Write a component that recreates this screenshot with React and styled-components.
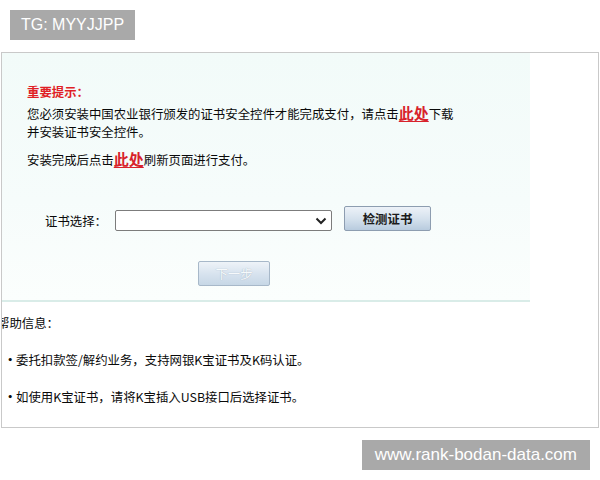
import styled, { createGlobalStyle } from 'styled-components';

const GlobalStyle = createGlobalStyle`
  html, body {
    margin: 0;
    padding: 0;
    background: #fff;
  }
  body {
    width: 600px;
    height: 480px;
    overflow: hidden;
    font-family: "Noto Sans CJK SC", "Liberation Sans", sans-serif;
  }
`;

const Page = styled.div`
  display: flex;
  flex-direction: column;
  width: 600px;
  height: 480px;
`;

const Tag = styled.div`
  align-self: ${(p) => (p.$right ? 'flex-end' : 'flex-start')};
  margin: ${(p) => (p.$right ? '12px 10px 0 0' : '10px 0 0 10px')};
  height: 30px;
  padding: 0 ${(p) => (p.$right ? '13px' : '11px')};
  display: flex;
  align-items: center;
  background: #a9a9a9;
  color: #fff;
  font-family: "Liberation Sans", Arial, sans-serif;
  font-size: ${(p) => (p.$right ? '17px' : '16px')};
  white-space: nowrap;
`;

const Frame = styled.div`
  margin: 12px 0 0 1px;
  width: 598px;
  height: 376px;
  box-sizing: border-box;
  border: 1px solid #c9c9c9;
  overflow: hidden;
  color: #0a0a0a;
  font-size: 12.4px;
  line-height: 18px;
`;

const Notice = styled.div`
  width: 528px;
  height: 249px;
  box-sizing: border-box;
  padding-top: 30px;
  background: linear-gradient(180deg, #f2fbf9 0%, #f6fcfb 60%, #fbfefd 100%);
  border-bottom: 2px solid #d9ece8;
  display: flex;
  flex-direction: column;
`;

const Line = styled.div`
  padding-left: ${(p) => p.$indent ?? 25}px;
  margin-top: ${(p) => p.$gap ?? 0}px;
  white-space: nowrap;
`;

const Title = styled(Line)`
  color: #e01f26;
  font-weight: 700;
`;

const Here = styled.a`
  color: #d8222b;
  font-weight: 700;
  font-size: 15px;
  text-decoration: underline;
  text-underline-offset: 2px;
`;

const CertRow = styled.div`
  display: flex;
  align-items: center;
  margin: 37px 0 0 43px;
  height: 25px;
`;

const Label = styled.span`
  width: 70px;
  margin-top: 4px;
`;

const Select = styled.div`
  width: 217px;
  height: 21px;
  margin-top: 4px;
  box-sizing: border-box;
  border: 1px solid #7c7c7c;
  border-radius: 2px;
  background: #fff;
  display: flex;
  align-items: center;
  justify-content: flex-end;
  padding-right: 4px;
`;

const Button = styled.button`
  width: ${(p) => p.$w}px;
  height: 25px;
  box-sizing: border-box;
  border: 1px solid ${(p) => (p.$disabled ? '#a7b8c9' : '#8d9db0')};
  border-radius: 2px;
  background: ${(p) =>
    p.$disabled
      ? 'linear-gradient(180deg, #eef3f8 0%, #d6e2ee 55%, #c7d7e6 100%)'
      : 'linear-gradient(180deg, #edf2f8 0%, #d3e0ec 55%, #b8cbde 100%)'};
  color: ${(p) => (p.$disabled ? '#f6f9fb' : '#1b1b1b')};
  text-shadow: ${(p) => (p.$disabled ? '0 0 1px #8fa3b6' : 'none')};
  font-family: inherit;
  font-size: 12.4px;
  font-weight: ${(p) => (p.$disabled ? 400 : 700)};
  padding: 0;
  cursor: default;
`;

const NextWrap = styled.div`
  margin: 30px 0 0 196px;
`;

const Help = styled.div`
  display: flex;
  flex-direction: column;
  padding-top: 12px;
`;

const HelpTitle = styled.div`
  margin-left: -5px;
  white-space: nowrap;
`;

const HelpItem = styled.div`
  margin-top: 19px;
  display: flex;
  white-space: nowrap;
`;

const Dot = styled.span`
  width: 12px;
  padding-left: 2px;
  font-weight: 700;
`;

const Chevron = () => (
  <svg width="12" height="8" viewBox="0 0 12 8">
    <path d="M1.5 1.5 L6 6 L10.5 1.5" fill="none" stroke="#222" strokeWidth="2" />
  </svg>
);

export default function App() {
  return (
    <Page>
      <GlobalStyle />
      <Tag>TG: MYYJJPP</Tag>
      <Frame>
        <Notice>
          <Title>重要提示：</Title>
          <Line $gap={3}>
            您必须安装中国农业银行颁发的证书安全控件才能完成支付，请点击<Here>此处</Here>下载
          </Line>
          <Line>并安装证书安全控件。</Line>
          <Line $gap={9}>
            安装完成后点击<Here>此处</Here>刷新页面进行支付。
          </Line>
          <CertRow>
            <Label>证书选择：</Label>
            <Select>
              <Chevron />
            </Select>
            <Button $w={87} style={{ marginLeft: 12 }}>检测证书</Button>
          </CertRow>
          <NextWrap>
            <Button $w={72} $disabled>下一步</Button>
          </NextWrap>
        </Notice>
        <Help>
          <HelpTitle>帮助信息：</HelpTitle>
          <HelpItem>
            <Dot>·</Dot>委托扣款签/解约业务，支持网银K宝证书及K码认证。
          </HelpItem>
          <HelpItem>
            <Dot>·</Dot>如使用K宝证书，请将K宝插入USB接口后选择证书。
          </HelpItem>
        </Help>
      </Frame>
      <Tag $right>www.rank-bodan-data.com</Tag>
    </Page>
  );
}
